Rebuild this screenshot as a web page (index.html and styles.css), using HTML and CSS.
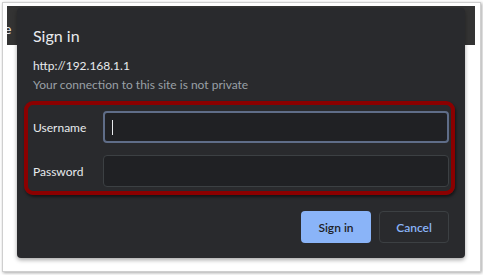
FILE: index.html
```html
<!DOCTYPE html>
<html lang="en">
<head>
    <meta charset="UTF-8">
    <title>Sign in</title>
    <link rel="stylesheet" href="styles.css">
</head>
<body>
    <div class="frame">
        <div class="page">
            <div class="topbar"><span class="stray">e</span></div>
        </div>

        <div class="dialog">
            <h2>Sign in</h2>
            <p class="origin">http://192.168.1.1</p>
            <p class="warning">Your connection to this site is not private</p>

            <div class="fields">
                <div class="form-row">
                    <label for="username">Username</label>
                    <div class="input focused"><span class="caret"></span></div>
                </div>
                <div class="form-row">
                    <label for="password">Password</label>
                    <div class="input"></div>
                </div>
            </div>

            <div class="actions">
                <button class="btn primary">Sign in</button>
                <button class="btn secondary">Cancel</button>
            </div>
        </div>
    </div>
</body>
</html>
```

FILE: styles.css
```css
* {
    margin: 0;
    padding: 0;
    box-sizing: border-box;
}

body {
    font-family: 'Lato', 'Open Sans', sans-serif;
    background: white;
    width: 483px;
    height: 275px;
    overflow: hidden;
}

.frame {
    position: relative;
    margin: 2px 0 0 2px;
    width: 479px;
    height: 270px;
    border: 1px solid #cfcfcf;
    box-shadow: 1px 1px 3px rgba(0, 0, 0, 0.35);
    padding: 3px 5px 0 4px;
    background: white;
}

.topbar {
    height: 39px;
    background: #333333;
    overflow: hidden;
}

.stray {
    display: block;
    color: #e8e8e8;
    font-size: 14px;
    margin: 14px 0 0 -3px;
}

.dialog {
    position: absolute;
    left: 14px;
    top: 5px;
    width: 448px;
    height: 250px;
    background: #292a2d;
    border-radius: 4px;
    box-shadow: 0 2px 4px rgba(0, 0, 0, 0.35);
    padding: 18px 16px 0 16px;
    color: #e8eaed;
}

h2 {
    font-size: 16px;
    font-weight: 400;
    line-height: 20px;
}

.origin {
    font-size: 12px;
    line-height: 16px;
    margin-top: 12px;
}

.warning {
    font-size: 12px;
    line-height: 16px;
    margin-top: 3px;
    color: #9aa0a6;
}

.fields {
    margin: 8px 0 0 -9px;
    width: 431px;
    border: 4px solid #8b0000;
    border-radius: 9px;
    box-shadow: 1px 2px 3px rgba(0, 0, 0, 0.5);
    padding: 6px 2px 4px 5px;
    display: flex;
    flex-direction: column;
    gap: 12px;
}

.form-row {
    display: flex;
    align-items: center;
}

label {
    width: 70px;
    font-size: 12px;
}

.input {
    width: 346px;
    height: 32px;
    background: #202124;
    border: 1px solid #3c4043;
    border-radius: 4px;
    padding: 7px 0 0 7px;
}

.input.focused {
    border: 2px solid #5f6d88;
}

.caret {
    display: block;
    width: 1px;
    height: 15px;
    background: #e8eaed;
}

.actions {
    display: flex;
    justify-content: flex-end;
    gap: 8px;
    margin: 16px 0 0 0;
}

.btn {
    width: 70px;
    height: 32px;
    border-radius: 4px;
    font-family: inherit;
    font-size: 12px;
    font-weight: 600;
    cursor: pointer;
}

.btn.primary {
    background: #8ab4f8;
    color: #202124;
    border: none;
}

.btn.secondary {
    background: transparent;
    color: #8ab4f8;
    border: 1px solid #3c4043;
}
```
